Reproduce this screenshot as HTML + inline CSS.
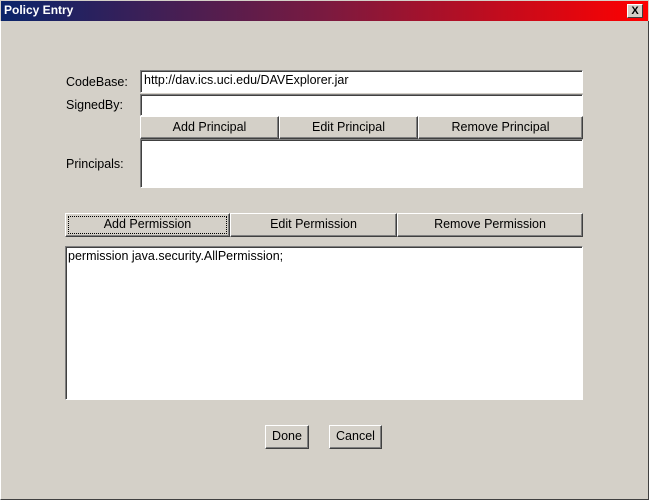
<!DOCTYPE html><html><head><style>
body{margin:0;width:649px;height:500px;background:#d4d0c8;position:relative;overflow:hidden;font-family:"Liberation Sans",sans-serif;font-size:12.5px;color:#000}
.a{position:absolute;box-sizing:border-box}
.tb{left:0;top:0;width:649px;height:21px;background:linear-gradient(90deg,#0a246a,#7a1a40 50%,#ff0000);border:1px solid #d4d0c8;border-bottom:none}
.tt{left:4px;top:3px;color:#fff;font-weight:bold;font-size:12px}
.x{left:627px;top:4px;width:16px;height:14px;background:#d4d0c8;border:1px solid;border-color:#fff #404040 #404040 #fff;font-size:11px;font-weight:bold;text-align:center;line-height:12px}
.f{background:#fff;border:1px solid;border-color:#808080 #fff #fff #808080;box-shadow:inset 1px 1px 0 #404040;padding:2px 3px}
.b{background:#d4d0c8;border:1px solid;border-color:#fff #404040 #404040 #fff;box-shadow:inset -1px -1px 0 #808080;text-align:center;line-height:21px}
.l{color:#000}
</style></head><body>
<div class="a tb"></div><div class="a tt">Policy Entry</div><div class="a x">X</div>
<div class="a" style="left:0;top:21px;width:649px;height:479px;border:1px solid;border-color:#fff #404040 #404040 #fff;border-top:none"></div>
<div class="a l" style="left:66px;top:75px">CodeBase:</div>
<div class="a l" style="left:66px;top:98px">SignedBy:</div>
<div class="a l" style="left:66px;top:157px">Principals:</div>
<div class="a f" style="left:140px;top:70px;width:443px;height:23px">http://dav.ics.uci.edu/DAVExplorer.jar</div>
<div class="a f" style="left:140px;top:94px;width:443px;height:22px"></div>
<div class="a b" style="left:140px;top:116px;width:139px;height:23px">Add Principal</div>
<div class="a b" style="left:279px;top:116px;width:139px;height:23px">Edit Principal</div>
<div class="a b" style="left:418px;top:116px;width:165px;height:23px">Remove Principal</div>
<div class="a f" style="left:140px;top:139px;width:443px;height:49px"></div>
<div class="a b" style="left:65px;top:213px;width:165px;height:24px">Add Permission</div>
<div class="a" style="left:68px;top:216px;width:159px;height:18px;border:1px dotted #000"></div>
<div class="a b" style="left:230px;top:213px;width:167px;height:24px">Edit Permission</div>
<div class="a b" style="left:397px;top:213px;width:186px;height:24px">Remove Permission</div>
<div class="a f" style="left:65px;top:246px;width:518px;height:154px;padding-left:2px">permission java.security.AllPermission;</div>
<div class="a b" style="left:265px;top:425px;width:44px;height:24px">Done</div>
<div class="a b" style="left:329px;top:425px;width:53px;height:24px">Cancel</div>
</body></html>
